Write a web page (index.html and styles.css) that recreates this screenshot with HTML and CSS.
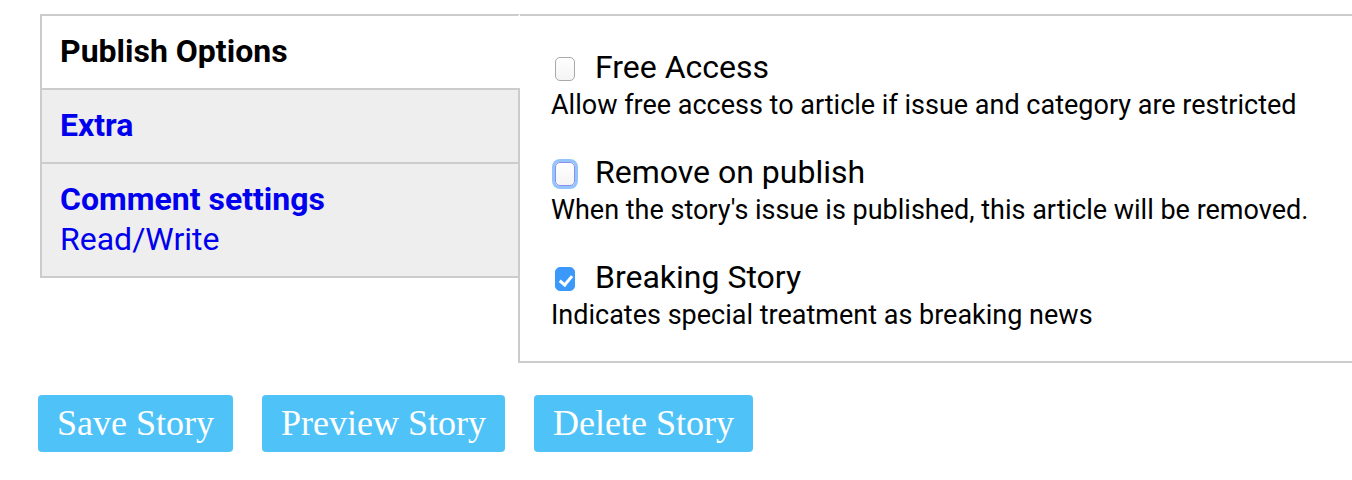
FILE: index.html
```html
<!DOCTYPE html>
<html lang="en">
<head>
    <meta charset="UTF-8">
    <meta name="viewport" content="width=device-width, initial-scale=1.0">
    <title>Edit Story</title>
    <link rel="stylesheet" href="styles.css">
</head>
<body>
    <form class="story-form" onsubmit="return false">
        <div class="tabs-row">
            <ul class="tabs">
                <li class="tab active"><span class="tab-title">Publish Options</span></li>
                <li class="tab"><a href="#" class="tab-title">Extra</a></li>
                <li class="tab">
                    <a href="#" class="tab-title">Comment settings</a>
                    <a href="#" class="tab-sub">Read/Write</a>
                </li>
            </ul>

            <div class="panel">
                <div class="option">
                    <label class="option-label"><input type="checkbox" class="check"> Free Access</label>
                    <p class="hint">Allow free access to article if issue and category are restricted</p>
                </div>
                <div class="option">
                    <label class="option-label"><input type="checkbox" class="check focused"> Remove on publish</label>
                    <p class="hint">When the story's issue is published, this article will be removed.</p>
                </div>
                <div class="option">
                    <label class="option-label"><input type="checkbox" class="check" checked> Breaking Story</label>
                    <p class="hint">Indicates special treatment as breaking news</p>
                </div>
            </div>
        </div>

        <div class="actions">
            <button class="btn">Save Story</button>
            <button class="btn">Preview Story</button>
            <button class="btn">Delete Story</button>
        </div>
    </form>
</body>
</html>
```

FILE: styles.css
```css
body {
    margin: 0;
    font-family: Roboto, "Liberation Sans", Arial, sans-serif;
    color: #000;
    background: #fff;
}

.story-form {
    padding: 14px 0 0 40px;
}

.tabs-row {
    display: flex;
    align-items: flex-start;
}

.tabs {
    list-style: none;
    margin: 0;
    padding: 0;
    width: 480px;
    flex-shrink: 0;
    position: relative;
    z-index: 1;
}

.tab {
    border: 2px solid #ccc;
    background: #eee;
    padding: 17px 18px 19px;
    font-size: 32px;
    line-height: 36px;
}

.tab + .tab {
    margin-top: -2px;
}

.tab.active {
    background: #fff;
    border-right-color: #fff;
}

.tab-title {
    display: block;
    font-weight: bold;
    color: #000;
    text-decoration: none;
}

a.tab-title,
.tab-sub {
    color: #0000ee;
    text-decoration: none;
}

.tab-sub {
    display: block;
    margin-top: 4px;
}

.panel {
    flex: 1;
    margin-left: -2px;
    border: 2px solid #ccc;
    border-right: none;
    padding: 31px 0 28px 31px;
}

.option + .option {
    margin-top: 29px;
}

.option-label {
    display: flex;
    align-items: center;
    font-size: 32px;
    line-height: 40px;
}

.hint {
    margin: 0;
    font-size: 27px;
    line-height: 36px;
}

.check {
    appearance: none;
    -webkit-appearance: none;
    position: relative;
    box-sizing: border-box;
    width: 20px;
    height: 24px;
    margin: 3px 20px 0 4px;
    border: 1px solid #a9a9a9;
    border-radius: 5px;
    background: linear-gradient(#fff, #f4f4f4);
    flex-shrink: 0;
}

.check.focused {
    border-color: #8c8cf0;
    box-shadow: 0 0 0 3px #93c5fb;
}

.check:checked {
    background: #3b99fc;
    border-color: #3b99fc;
}

.check:checked::after {
    content: "";
    position: absolute;
    left: 6px;
    top: 5px;
    width: 5px;
    height: 10px;
    border: solid #fff;
    border-width: 0 3px 3px 0;
    transform: rotate(40deg);
}

.actions {
    display: flex;
    gap: 29px;
    margin: 32px 0 0 -2px;
}

.btn {
    font-family: "Liberation Serif", "Times New Roman", serif;
    font-size: 36px;
    line-height: 37px;
    padding: 10px 19px;
    background-color: #4fc3f7;
    color: #fff;
    border: none;
    border-radius: 4px;
    cursor: pointer;
}
```
